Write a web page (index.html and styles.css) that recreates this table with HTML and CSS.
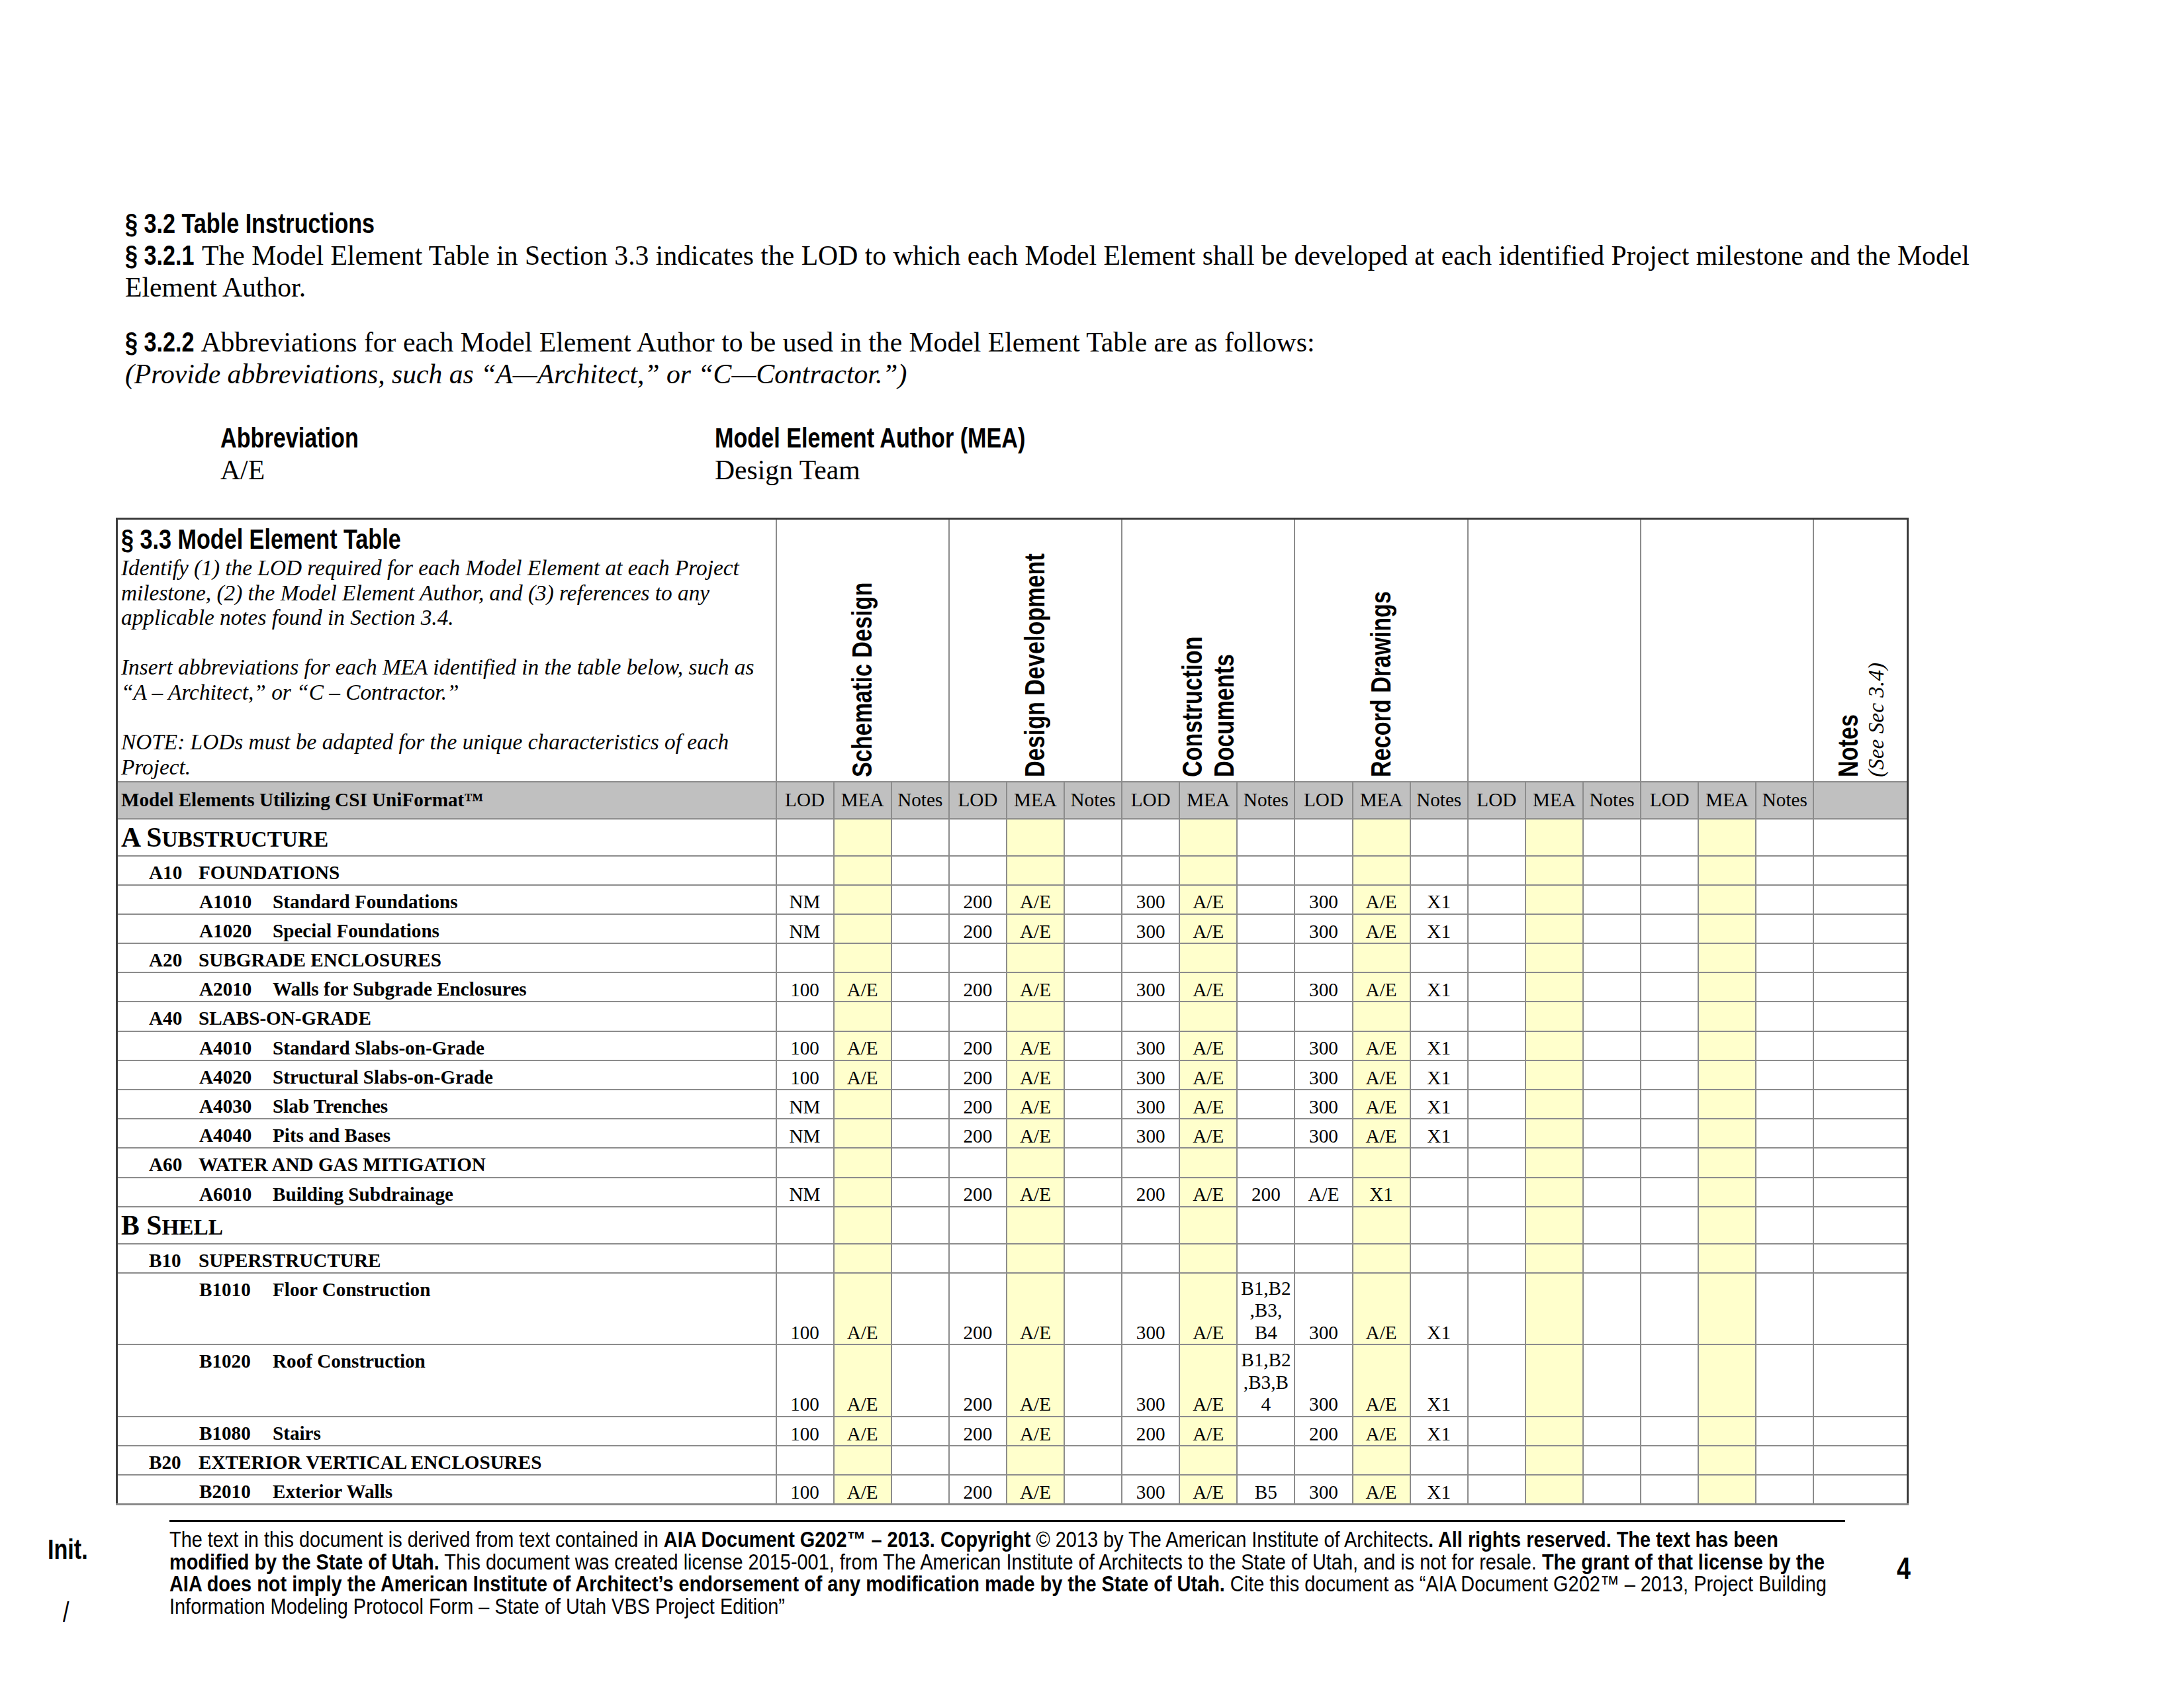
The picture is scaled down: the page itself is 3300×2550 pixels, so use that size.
FILE: index.html
```html
<!DOCTYPE html>
<html lang="en">
<head>
<meta charset="utf-8">
<title>Model Element Table</title>
<link rel="stylesheet" href="styles.css">
</head>
<body>
<div class="page">
  <section class="intro">
    <h2 class="sec-h">§ 3.2 Table Instructions</h2>
    <p class="para"><b class="sec-n">§ 3.2.1</b> The Model Element Table in Section 3.3 indicates the LOD to which each Model Element shall be developed at each identified Project milestone and the Model Element Author.</p>
    <p class="para gap"><b class="sec-n">§ 3.2.2</b> Abbreviations for each Model Element Author to be used in the Model Element Table are as follows:<br><i>(Provide abbreviations, such as “A—Architect,” or “C—Contractor.”)</i></p>
    <div class="abbr">
      <div class="abbr-row"><span class="abbr-k"><b class="hd">Abbreviation</b></span><b class="hd">Model Element Author (MEA)</b></div>
      <div class="abbr-row"><span class="abbr-k">A/E</span><span>Design Team</span></div>
    </div>
  </section>

  <table class="met">
    <colgroup>
      <col class="c-lbl">
      <col class="c-s"><col class="c-s"><col class="c-s">
      <col class="c-s"><col class="c-s"><col class="c-s">
      <col class="c-s"><col class="c-s"><col class="c-s">
      <col class="c-s"><col class="c-s"><col class="c-s">
      <col class="c-s"><col class="c-s"><col class="c-s">
      <col class="c-s"><col class="c-s"><col class="c-s">
      <col class="c-n">
    </colgroup>
    <thead>
      <tr class="hdr-top">
        <th class="intro-cell">
          <div class="met-h">§ 3.3 Model Element Table</div>
          <p class="inst">Identify (1) the LOD required for each Model Element at each Project milestone, (2) the Model Element Author, and (3) references to any applicable notes found in Section 3.4.</p>
          <p class="inst">Insert abbreviations for each MEA identified in the table below, such as “A – Architect,” or “C – Contractor.”</p>
          <p class="inst">NOTE: LODs must be adapted for the unique characteristics of each Project.</p>
        </th>
        <th colspan="3" class="phase"><span class="vt">Schematic Design</span></th>
        <th colspan="3" class="phase"><span class="vt">Design Development</span></th>
        <th colspan="3" class="phase"><span class="vt">Construction<br>Documents</span></th>
        <th colspan="3" class="phase"><span class="vt">Record Drawings</span></th>
        <th colspan="3" class="phase"></th>
        <th colspan="3" class="phase"></th>
        <th class="phase"><span class="vt">Notes</span><span class="vt-i">(See Sec 3.4)</span></th>
      </tr>
      <tr class="hdr-sub">
        <th class="lbl-h">Model Elements Utilizing CSI UniFormat™</th>
        <th>LOD</th><th>MEA</th><th>Notes</th>
        <th>LOD</th><th>MEA</th><th>Notes</th>
        <th>LOD</th><th>MEA</th><th>Notes</th>
        <th>LOD</th><th>MEA</th><th>Notes</th>
        <th>LOD</th><th>MEA</th><th>Notes</th>
        <th>LOD</th><th>MEA</th><th>Notes</th>
        <th></th>
      </tr>
    </thead>
    <tbody>
      <tr class="sec">
        <td class="lbl l0">A S<span class="sc">UBSTRUCTURE</span></td>
        <td></td><td class="mea"></td><td></td><td></td><td class="mea"></td><td></td><td></td><td class="mea"></td><td></td><td></td><td class="mea"></td><td></td><td></td><td class="mea"></td><td></td><td></td><td class="mea"></td><td></td><td></td>
      </tr>
      <tr class="r">
        <td class="lbl l1"><span class="code1">A10</span>FOUNDATIONS</td>
        <td></td><td class="mea"></td><td></td><td></td><td class="mea"></td><td></td><td></td><td class="mea"></td><td></td><td></td><td class="mea"></td><td></td><td></td><td class="mea"></td><td></td><td></td><td class="mea"></td><td></td><td></td>
      </tr>
      <tr class="r">
        <td class="lbl l2"><span class="code2">A1010</span>Standard Foundations</td>
        <td>NM</td><td class="mea"></td><td></td><td>200</td><td class="mea">A/E</td><td></td><td>300</td><td class="mea">A/E</td><td></td><td>300</td><td class="mea">A/E</td><td>X1</td><td></td><td class="mea"></td><td></td><td></td><td class="mea"></td><td></td><td></td>
      </tr>
      <tr class="r">
        <td class="lbl l2"><span class="code2">A1020</span>Special Foundations</td>
        <td>NM</td><td class="mea"></td><td></td><td>200</td><td class="mea">A/E</td><td></td><td>300</td><td class="mea">A/E</td><td></td><td>300</td><td class="mea">A/E</td><td>X1</td><td></td><td class="mea"></td><td></td><td></td><td class="mea"></td><td></td><td></td>
      </tr>
      <tr class="r">
        <td class="lbl l1"><span class="code1">A20</span>SUBGRADE ENCLOSURES</td>
        <td></td><td class="mea"></td><td></td><td></td><td class="mea"></td><td></td><td></td><td class="mea"></td><td></td><td></td><td class="mea"></td><td></td><td></td><td class="mea"></td><td></td><td></td><td class="mea"></td><td></td><td></td>
      </tr>
      <tr class="r">
        <td class="lbl l2"><span class="code2">A2010</span>Walls for Subgrade Enclosures</td>
        <td>100</td><td class="mea">A/E</td><td></td><td>200</td><td class="mea">A/E</td><td></td><td>300</td><td class="mea">A/E</td><td></td><td>300</td><td class="mea">A/E</td><td>X1</td><td></td><td class="mea"></td><td></td><td></td><td class="mea"></td><td></td><td></td>
      </tr>
      <tr class="r">
        <td class="lbl l1"><span class="code1">A40</span>SLABS-ON-GRADE</td>
        <td></td><td class="mea"></td><td></td><td></td><td class="mea"></td><td></td><td></td><td class="mea"></td><td></td><td></td><td class="mea"></td><td></td><td></td><td class="mea"></td><td></td><td></td><td class="mea"></td><td></td><td></td>
      </tr>
      <tr class="r">
        <td class="lbl l2"><span class="code2">A4010</span>Standard Slabs-on-Grade</td>
        <td>100</td><td class="mea">A/E</td><td></td><td>200</td><td class="mea">A/E</td><td></td><td>300</td><td class="mea">A/E</td><td></td><td>300</td><td class="mea">A/E</td><td>X1</td><td></td><td class="mea"></td><td></td><td></td><td class="mea"></td><td></td><td></td>
      </tr>
      <tr class="r">
        <td class="lbl l2"><span class="code2">A4020</span>Structural Slabs-on-Grade</td>
        <td>100</td><td class="mea">A/E</td><td></td><td>200</td><td class="mea">A/E</td><td></td><td>300</td><td class="mea">A/E</td><td></td><td>300</td><td class="mea">A/E</td><td>X1</td><td></td><td class="mea"></td><td></td><td></td><td class="mea"></td><td></td><td></td>
      </tr>
      <tr class="r">
        <td class="lbl l2"><span class="code2">A4030</span>Slab Trenches</td>
        <td>NM</td><td class="mea"></td><td></td><td>200</td><td class="mea">A/E</td><td></td><td>300</td><td class="mea">A/E</td><td></td><td>300</td><td class="mea">A/E</td><td>X1</td><td></td><td class="mea"></td><td></td><td></td><td class="mea"></td><td></td><td></td>
      </tr>
      <tr class="r">
        <td class="lbl l2"><span class="code2">A4040</span>Pits and Bases</td>
        <td>NM</td><td class="mea"></td><td></td><td>200</td><td class="mea">A/E</td><td></td><td>300</td><td class="mea">A/E</td><td></td><td>300</td><td class="mea">A/E</td><td>X1</td><td></td><td class="mea"></td><td></td><td></td><td class="mea"></td><td></td><td></td>
      </tr>
      <tr class="r">
        <td class="lbl l1"><span class="code1">A60</span>WATER AND GAS MITIGATION</td>
        <td></td><td class="mea"></td><td></td><td></td><td class="mea"></td><td></td><td></td><td class="mea"></td><td></td><td></td><td class="mea"></td><td></td><td></td><td class="mea"></td><td></td><td></td><td class="mea"></td><td></td><td></td>
      </tr>
      <tr class="r">
        <td class="lbl l2"><span class="code2">A6010</span>Building Subdrainage</td>
        <td>NM</td><td class="mea"></td><td></td><td>200</td><td class="mea">A/E</td><td></td><td>200</td><td class="mea">A/E</td><td>200</td><td>A/E</td><td class="mea">X1</td><td></td><td></td><td class="mea"></td><td></td><td></td><td class="mea"></td><td></td><td></td>
      </tr>
      <tr class="sec">
        <td class="lbl l0">B S<span class="sc">HELL</span></td>
        <td></td><td class="mea"></td><td></td><td></td><td class="mea"></td><td></td><td></td><td class="mea"></td><td></td><td></td><td class="mea"></td><td></td><td></td><td class="mea"></td><td></td><td></td><td class="mea"></td><td></td><td></td>
      </tr>
      <tr class="r">
        <td class="lbl l1"><span class="code1">B10</span>SUPERSTRUCTURE</td>
        <td></td><td class="mea"></td><td></td><td></td><td class="mea"></td><td></td><td></td><td class="mea"></td><td></td><td></td><td class="mea"></td><td></td><td></td><td class="mea"></td><td></td><td></td><td class="mea"></td><td></td><td></td>
      </tr>
      <tr class="tall">
        <td class="lbl l2"><span class="code2">B1010</span>Floor Construction</td>
        <td>100</td><td class="mea">A/E</td><td></td><td>200</td><td class="mea">A/E</td><td></td><td>300</td><td class="mea">A/E</td><td>B1,B2<br>,B3,<br>B4</td><td>300</td><td class="mea">A/E</td><td>X1</td><td></td><td class="mea"></td><td></td><td></td><td class="mea"></td><td></td><td></td>
      </tr>
      <tr class="tall">
        <td class="lbl l2"><span class="code2">B1020</span>Roof Construction</td>
        <td>100</td><td class="mea">A/E</td><td></td><td>200</td><td class="mea">A/E</td><td></td><td>300</td><td class="mea">A/E</td><td>B1,B2<br>,B3,B<br>4</td><td>300</td><td class="mea">A/E</td><td>X1</td><td></td><td class="mea"></td><td></td><td></td><td class="mea"></td><td></td><td></td>
      </tr>
      <tr class="r">
        <td class="lbl l2"><span class="code2">B1080</span>Stairs</td>
        <td>100</td><td class="mea">A/E</td><td></td><td>200</td><td class="mea">A/E</td><td></td><td>200</td><td class="mea">A/E</td><td></td><td>200</td><td class="mea">A/E</td><td>X1</td><td></td><td class="mea"></td><td></td><td></td><td class="mea"></td><td></td><td></td>
      </tr>
      <tr class="r">
        <td class="lbl l1"><span class="code1">B20</span>EXTERIOR VERTICAL ENCLOSURES</td>
        <td></td><td class="mea"></td><td></td><td></td><td class="mea"></td><td></td><td></td><td class="mea"></td><td></td><td></td><td class="mea"></td><td></td><td></td><td class="mea"></td><td></td><td></td><td class="mea"></td><td></td><td></td>
      </tr>
      <tr class="r">
        <td class="lbl l2"><span class="code2">B2010</span>Exterior Walls</td>
        <td>100</td><td class="mea">A/E</td><td></td><td>200</td><td class="mea">A/E</td><td></td><td>300</td><td class="mea">A/E</td><td>B5</td><td>300</td><td class="mea">A/E</td><td>X1</td><td></td><td class="mea"></td><td></td><td></td><td class="mea"></td><td></td><td></td>
      </tr>
    </tbody>
  </table>

  <footer class="foot">
    <div class="init-col">
      <div class="init"><b class="nar">Init.</b></div>
      <div class="slash"><span class="nar">/</span></div>
    </div>
    <div class="foot-main">
      <div class="fl">The text in this document is derived from text contained in <b>AIA Document G202™ – 2013. Copyright</b> © 2013 by The American Institute of Architects<b>. All rights reserved. The text has been</b></div>
      <div class="fl"><b>modified by the State of Utah.</b> This document was created license 2015-001, from The American Institute of Architects to the State of Utah, and is not for resale. <b>The grant of that license by the</b></div>
      <div class="fl"><b>AIA does not imply the American Institute of Architect’s endorsement of any modification made by the State of Utah.</b> Cite this document as “AIA Document G202™ – 2013, Project Building</div>
      <div class="fl">Information Modeling Protocol Form – State of Utah VBS Project Edition”</div>
    </div>
    <div class="pagenum"><b class="nar">4</b></div>
  </footer>
</div>
</body>
</html>
```

FILE: styles.css
```css
* { box-sizing: border-box; }

html, body {
  margin: 0;
  padding: 0;
  background: #ffffff;
}

body {
  width: 3300px;
  height: 2550px;
  overflow: hidden;
  color: #000;
  font-family: "Liberation Serif", "Times New Roman", serif;
}

.page {
  padding-top: 314px;
}

/* narrow sans (Arial Narrow look): Liberation Sans squeezed horizontally */
.nar {
  display: inline-block;
  font-family: "Liberation Sans", Arial, sans-serif;
  transform: scaleX(0.82);
  transform-origin: 0 50%;
}

/* ---------- intro ---------- */
.intro {
  margin-left: 189px;
  width: 2870px;
}

.sec-h {
  margin: 0;
  font-family: "Liberation Sans", Arial, sans-serif;
  font-weight: bold;
  font-size: 41.67px;
  line-height: 48px;
  transform: scaleX(0.82);
  transform-origin: 0 50%;
}

.para {
  margin: 0;
  font-size: 41.67px;
  line-height: 48px;
}

.para.gap { margin-top: 35px; }

.sec-n {
  display: inline-block;
  font-family: "Liberation Sans", Arial, sans-serif;
  font-weight: bold;
  transform: scaleX(0.82);
  transform-origin: 0 50%;
  margin-right: -21px;
}

.abbr {
  margin-top: 49px;
  padding-left: 144px;
}

.abbr-row {
  display: flex;
  font-size: 41.67px;
  line-height: 48px;
}

.abbr-k { width: 747px; flex: none; }

.hd {
  display: inline-block;
  font-family: "Liberation Sans", Arial, sans-serif;
  font-weight: bold;
  transform: scaleX(0.82);
  transform-origin: 0 50%;
  white-space: nowrap;
}

/* ---------- table ---------- */
.met {
  margin-left: 175px;
  margin-top: 48px;
  width: 2706px;
  table-layout: fixed;
  border-collapse: collapse;
  border: 3px solid #3c3c3c;
  border-bottom-color: #8a8a8a;
}

.c-lbl { width: 996px; }
.c-s { width: 87.1px; }
.c-n { width: 142px; }

.met th,
.met td {
  border: 2px solid #8c8c8c;
  padding: 0 4px;
  font-size: 29.17px;
  line-height: 33.5px;
  font-weight: normal;
  text-align: center;
  vertical-align: bottom;
  overflow: hidden;
}

.hdr-top { height: 397px; }

.met th.intro-cell {
  text-align: left;
  vertical-align: top;
  padding: 6px 4px 0 5px;
}

.met-h {
  font-family: "Liberation Sans", Arial, sans-serif;
  font-weight: bold;
  font-size: 41.67px;
  line-height: 48px;
  white-space: nowrap;
  transform: scaleX(0.82);
  transform-origin: 0 50%;
}

.inst {
  margin: 0;
  font-style: italic;
  font-size: 33.33px;
  line-height: 37.6px;
}

.inst + .inst { margin-top: 37.6px; }

.met th.phase {
  font-size: 0;
  line-height: 0;
  padding: 0 0 6px;
  text-align: center;
  vertical-align: bottom;
  overflow: visible;
}

/* rotated header: reads bottom-to-top, compressed along the text */
.vt {
  display: inline-block;
  height: 300px;
  writing-mode: vertical-rl;
  transform: rotate(180deg) scaleY(0.82);
  transform-origin: 50% 54.945%;
  text-align: left;
  vertical-align: bottom;
  font-family: "Liberation Sans", Arial, sans-serif;
  font-weight: bold;
  font-size: 41.67px;
  line-height: 48px;
  white-space: nowrap;
}

.vt-i {
  display: inline-block;
  height: 300px;
  writing-mode: vertical-rl;
  transform: rotate(180deg);
  text-align: left;
  vertical-align: bottom;
  font-style: italic;
  font-size: 33.33px;
  line-height: 36px;
  white-space: nowrap;
}

.hdr-sub { height: 56px; }

.met .hdr-sub th {
  background: #c0c0c0;
  vertical-align: middle;
}

.met .hdr-sub th.lbl-h {
  text-align: left;
  font-weight: bold;
  padding-left: 5px;
}

.r { height: 44.2px; }
.sec { height: 56px; }
.tall { height: 108.5px; }

.met td.mea { background: #ffffcc; }

.met td.lbl {
  text-align: left;
  vertical-align: top;
  padding-top: 8px;
  font-weight: bold;
  white-space: nowrap;
}

.met td.l0 {
  vertical-align: bottom;
  padding: 0 0 2px 5px;
  font-size: 41.67px;
  line-height: 44px;
}

.sc { font-size: 33.33px; }

.met td.l1 { padding-left: 47px; }
.met td.l2 { padding-left: 123px; }

.code1 {
  display: inline-block;
  width: 75px;
}

.code2 {
  display: inline-block;
  width: 111px;
}

/* ---------- footer ---------- */
.foot {
  display: flex;
  margin-top: 22px;
}

.init-col {
  width: 256px;
  flex: none;
  padding: 21px 0 0 72px;
}

.init {
  font-size: 41.67px;
  line-height: 48px;
}

.slash {
  margin-top: 47px;
  padding-left: 23px;
  font-size: 41.67px;
  line-height: 48px;
}

.foot-main {
  width: 2532px;
  flex: none;
  border-top: 3px solid #000;
  padding-top: 10px;
  font-family: "Liberation Sans", Arial, sans-serif;
  font-size: 33.33px;
  line-height: 33.7px;
}

.fl {
  white-space: nowrap;
  transform: scaleX(0.867);
  transform-origin: 0 50%;
}

.pagenum {
  margin-left: 78px;
  padding-top: 48px;
  font-size: 45.8px;
  line-height: 52px;
}
```
